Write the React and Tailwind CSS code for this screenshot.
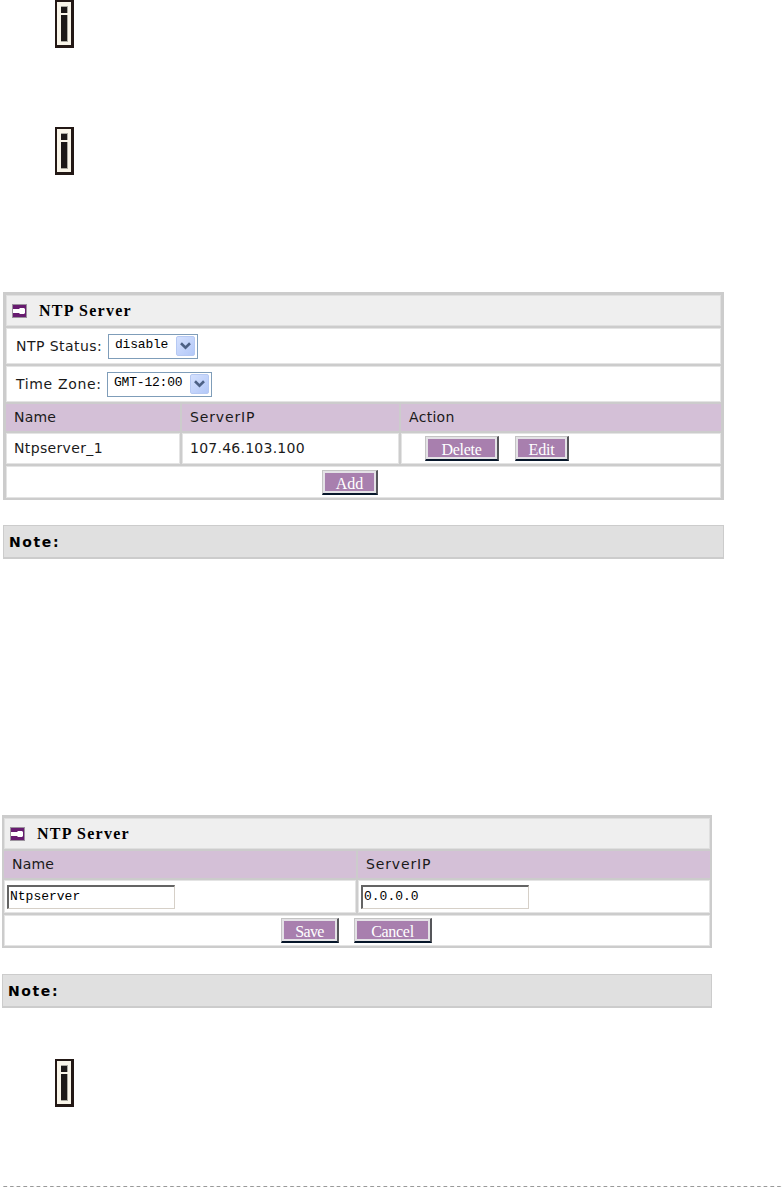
const columns = [
  { label: 'Name', spacing: 'tracking-[0.2px]' },
  { label: 'ServerIP', spacing: 'tracking-[0.85px]' },
  { label: 'Action', spacing: 'tracking-[0.3px]' },
];
const servers = [{ name: 'Ntpserver_1', ip: '107.46.103.100' }];

const labelText = "font-['DejaVu_Sans',sans-serif] text-[14px] leading-[16px] text-[#1a1a1a]";
const monoText = "font-['Liberation_Mono',monospace] text-[13px] leading-[16px] text-black";

function InfoIcon() {
  return (
    <svg className="ml-[55px] block h-12 w-[19px] shrink-0" viewBox="0 0 19 48" shapeRendering="crispEdges">
      <rect width="19" height="48" fill="#231815" />
      <rect x="2" y="2" width="14" height="43" fill="#f9f5e9" />
      <rect x="6" y="6" width="7" height="7" fill="#aaa8a0" />
      <rect x="6" y="7" width="6" height="6" fill="#1c1817" />
      <rect x="6" y="15" width="7" height="27" fill="#aaa8a0" />
      <rect x="6" y="15" width="6" height="26" fill="#1c1817" />
    </svg>
  );
}

function PanelTitle({ children }) {
  return (
    <div className="flex h-[31px] items-center border border-[#dfdfdf] bg-[#efefef] pl-[5px]">
      <svg className="h-[14px] w-[15px]" viewBox="0 0 15 14">
        <rect width="15" height="14" fill="#9b939d" />
        <rect x="1" y="1" width="13" height="12" fill="#681c70" />
        <path d="M1 5h6l1-1h4l1 1v4l-1 1H8L7 9H1z" fill="#fff" />
      </svg>
      <span className="ml-[12px] font-['Liberation_Serif',serif] text-[16px] leading-[18px] font-bold tracking-[1.25px] text-black">{children}</span>
    </div>
  );
}

function Select({ value, className }) {
  return (
    <div className={`flex h-[25px] items-center border border-[#7f9db9] bg-white pr-[2px] pl-[6px] ${className}`}>
      <span className={`${monoText} -mt-[3px] flex-1 whitespace-nowrap tracking-[-0.2px]`}>{value}</span>
      <span className="flex h-[20px] w-[19px] items-center justify-center rounded-[2px] border border-[#b6c9f3] bg-gradient-to-br from-[#d5e1fe] to-[#b3c8f8]">
        <svg className="h-[8px] w-[11px]" viewBox="0 0 11 8">
          <path d="M1 1.3l4.5 4.4L10 1.3" fill="none" stroke="#4d6185" strokeWidth="2.6" />
        </svg>
      </span>
    </div>
  );
}

function Button({ children, className }) {
  return (
    <button className={`flex h-[25px] items-center justify-center border border-t-[#c4c4c4] border-r-2 border-r-[#55565a] border-b-2 border-b-[#07172b] border-l-[#c4c4c4] bg-[#a87fae] pt-[4px] font-['Liberation_Serif',serif] text-[16px] leading-[18px] text-white shadow-[inset_0_0_0_2px_#e4e2e6] ${className}`}>
      {children}
    </button>
  );
}

function TextInput({ value }) {
  return (
    <input
      readOnly
      value={value}
      className={`${monoText} h-[24px] w-[168px] border-t-2 border-r border-b border-l-2 border-t-[#646464] border-r-[#d6d0c8] border-b-[#d6d0c8] border-l-[#646464] bg-white pb-[2px] pl-[1px]`}
    />
  );
}

function Note({ className }) {
  return (
    <div className={`flex h-[34px] items-center border border-b-2 border-[#ccc] bg-[#e0e0e0] pl-[5px] ${className}`}>
      <span className="font-['DejaVu_Sans',sans-serif] text-[14px] leading-[16px] font-bold tracking-[1.6px] text-black">Note:</span>
    </div>
  );
}

export default function App() {
  return (
    <div className="flex h-[1190px] w-[783px] flex-col overflow-hidden bg-white">
      <InfoIcon />
      <div className="mt-[79px]"><InfoIcon /></div>

      <section className="mt-[117px] ml-[3px] flex w-[721px] flex-col gap-[2px] bg-[#ccc] px-[3px] pt-[3px] pb-[2px]">
        <PanelTitle>NTP Server</PanelTitle>
        <div className="flex h-[36px] items-center border border-[#e4e4e4] bg-white pl-[9px]">
          <span className={`${labelText} w-[92px] whitespace-nowrap tracking-[0.45px]`}>NTP Status:</span>
          <Select value="disable" className="w-[90px]" />
        </div>
        <div className="flex h-[36px] items-center border border-[#e4e4e4] bg-white pl-[9px]">
          <span className={`${labelText} w-[91px] whitespace-nowrap tracking-[0.65px]`}>Time Zone:</span>
          <Select value="GMT-12:00" className="w-[105px]" />
        </div>
        <div className="grid h-[27px] grid-cols-[174px_217px_1fr] gap-[2px]">
          {columns.map((c) => (
            <div key={c.label} className={`${labelText} ${c.spacing} flex items-center bg-[#d4c0d7] pb-[2px] pl-[8px]`}>{c.label}</div>
          ))}
        </div>
        {servers.map((s) => (
          <div key={s.name} className="grid h-[31px] grid-cols-[174px_217px_1fr] gap-[2px]">
            <div className={`${labelText} flex items-center border border-[#e4e4e4] bg-white pb-px pl-[7px] tracking-[0.35px]`}>{s.name}</div>
            <div className={`${labelText} flex items-center border border-[#e4e4e4] bg-white pb-px pl-[7px] tracking-[0.25px]`}>{s.ip}</div>
            <div className="flex items-center gap-[16px] border border-[#e4e4e4] bg-white pl-[23px]">
              <Button className="w-[74px] tracking-[-0.25px]">Delete</Button>
              <Button className="w-[54px] tracking-[-0.2px]">Edit</Button>
            </div>
          </div>
        ))}
        <div className="flex h-[32px] items-center border border-[#e4e4e4] bg-white pl-[315px]">
          <Button className="w-[56px]">Add</Button>
        </div>
      </section>
      <Note className="mt-[25px] ml-[3px] w-[721px]" />

      <section className="mt-[256px] ml-[2px] flex w-[710px] flex-col gap-[2px] bg-[#ccc] pt-[3px] pr-[2px] pb-[2px] pl-[2px]">
        <PanelTitle>NTP Server</PanelTitle>
        <div className="grid h-[27px] grid-cols-[352px_1fr] gap-[2px]">
          {columns.slice(0, 2).map((c) => (
            <div key={c.label} className={`${labelText} ${c.spacing} flex items-center bg-[#d4c0d7] pb-[2px] pl-[8px]`}>{c.label}</div>
          ))}
        </div>
        <div className="grid h-[33px] grid-cols-[352px_1fr] gap-[2px]">
          <div className="flex items-center border border-[#e4e4e4] bg-white pl-[2px]"><TextInput value="Ntpserver" /></div>
          <div className="flex items-center border border-[#e4e4e4] bg-white pl-[2px]"><TextInput value="0.0.0.0" /></div>
        </div>
        <div className="flex h-[31px] items-center gap-[15px] border border-[#e4e4e4] bg-white pl-[276px]">
          <Button className="w-[58px] tracking-[-0.6px]">Save</Button>
          <Button className="w-[78px] tracking-[-0.3px]">Cancel</Button>
        </div>
      </section>
      <Note className="mt-[26px] ml-[2px] w-[710px]" />

      <div className="mt-[51px]"><InfoIcon /></div>
      <div className="mt-[79px] ml-[3px] h-px bg-[repeating-linear-gradient(90deg,#ddd_0px,#999_1px,#999_3.6px,#ddd_4px,#fff_5px,#fff_6.67px)]" />
    </div>
  );
}
